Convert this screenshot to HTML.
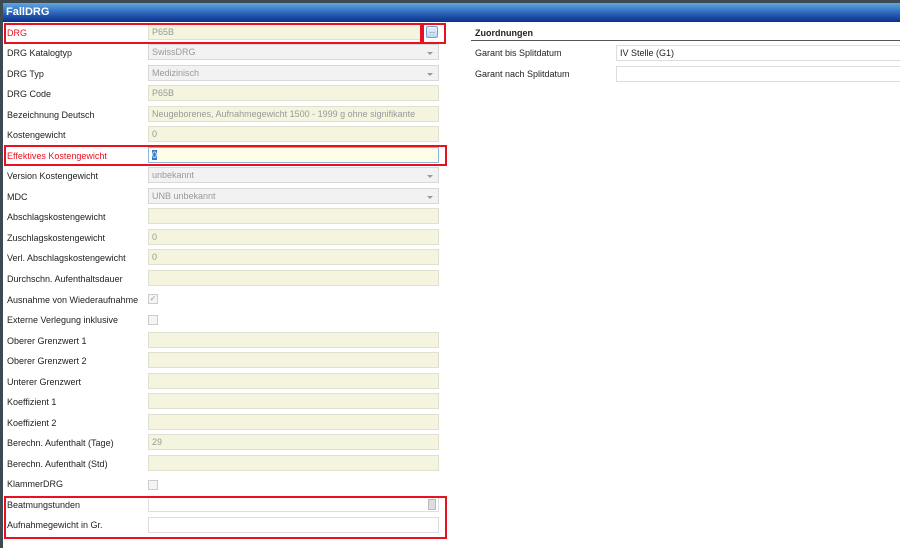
<!DOCTYPE html>
<html><head><meta charset="utf-8"><style>
*{box-sizing:border-box;margin:0;padding:0}
body{width:900px;height:548px;overflow:hidden;background:#fff;font-family:"Liberation Sans",Arial,sans-serif;font-size:9px;color:#222;position:relative}
.top{position:absolute;left:0;top:0;width:900px;height:3px;background:#3d4a52}
.hdr{position:absolute;left:0;top:3px;width:900px;height:19px;background:linear-gradient(#5fa6e0,#2a63b8 55%,#0b2f8c);color:#fff;font-weight:bold;font-size:11px;padding:3px 0 0 6px}
.lb{position:absolute;left:0;top:0;width:3px;height:548px;background:#3d4a52}
.lab{position:absolute;left:7px;font-size:9px;color:#222;margin-top:1px}
.in{position:absolute;left:148px;width:291px;height:16px;background:#f4f4df;border:1px solid #e0e0d0;color:#999;padding:2px 0 0 3px;font-size:9px}
.sel{background:#f2f2f2;border:1px solid #d8d8d8}
.sel:after{content:"";position:absolute;right:5px;top:7px;border:3px solid transparent;border-top:3px solid #999}
.cb{position:absolute;left:148px;width:10px;height:10px;border:1px solid #ccc;background:#f4f4f4}
.red{position:absolute;border:2px solid #e8111f}
.w{background:#fff;border:1px solid #ddd}
</style></head><body>
<div class="top"></div><div class="hdr">FallDRG</div><div class="lb"></div>

<div class="lab" style="top:27px;color:#e8111f">DRG</div><div class="in" style="top:24px;width:274px">P65B</div>
<div style="position:absolute;left:426px;top:26px;width:12px;height:12px;border:1px solid #7aa0cc;border-radius:2px;background:linear-gradient(#e8f2fc,#bcd6f0);font-size:7px;color:#555;text-align:center;line-height:9px">...</div>
<div class="lab" style="top:47px">DRG Katalogtyp</div><div class="in sel" style="top:44px">SwissDRG</div>
<div class="lab" style="top:68px">DRG Typ</div><div class="in sel" style="top:65px">Medizinisch</div>
<div class="lab" style="top:88px">DRG Code</div><div class="in" style="top:85px">P65B</div>
<div class="lab" style="top:109px">Bezeichnung Deutsch</div><div class="in" style="top:106px">Neugeborenes, Aufnahmegewicht 1500 - 1999 g ohne signifikante</div>
<div class="lab" style="top:129px">Kostengewicht</div><div class="in" style="top:126px">0</div>
<div class="lab" style="top:150px;color:#e8111f">Effektives Kostengewicht</div><div class="in" style="top:147px;background:#fefee8;border-color:#8fb7e0;color:#222"><span style="background:#3a78c8;color:#fff">0</span></div>
<div class="lab" style="top:170px">Version Kostengewicht</div><div class="in sel" style="top:167px">unbekannt</div>
<div class="lab" style="top:191px">MDC</div><div class="in sel" style="top:188px">UNB unbekannt</div>
<div class="lab" style="top:211px">Abschlagskostengewicht</div><div class="in" style="top:208px"></div>
<div class="lab" style="top:232px">Zuschlagskostengewicht</div><div class="in" style="top:229px">0</div>
<div class="lab" style="top:252px">Verl. Abschlagskostengewicht</div><div class="in" style="top:249px">0</div>
<div class="lab" style="top:273px">Durchschn. Aufenthaltsdauer</div><div class="in" style="top:270px"></div>
<div class="lab" style="top:294px">Ausnahme von Wiederaufnahme</div><div class="cb" style="top:294px;color:#99a;font-size:8px;line-height:8px;text-align:center">✓</div>
<div class="lab" style="top:314px">Externe Verlegung inklusive</div><div class="cb" style="top:315px"></div>
<div class="lab" style="top:335px">Oberer Grenzwert 1</div><div class="in" style="top:332px"></div>
<div class="lab" style="top:355px">Oberer Grenzwert 2</div><div class="in" style="top:352px"></div>
<div class="lab" style="top:376px">Unterer Grenzwert</div><div class="in" style="top:373px"></div>
<div class="lab" style="top:396px">Koeffizient 1</div><div class="in" style="top:393px"></div>
<div class="lab" style="top:417px">Koeffizient 2</div><div class="in" style="top:414px"></div>
<div class="lab" style="top:437px">Berechn. Aufenthalt (Tage)</div><div class="in" style="top:434px">29</div>
<div class="lab" style="top:458px">Berechn. Aufenthalt (Std)</div><div class="in" style="top:455px"></div>
<div class="lab" style="top:478px">KlammerDRG</div><div class="cb" style="top:480px"></div>
<div class="lab" style="top:499px">Beatmungstunden</div><div class="in w" style="top:496px"><div style="position:absolute;right:2px;top:2px;width:8px;height:11px;background:#ddd;border:1px solid #bbb"></div></div>
<div class="lab" style="top:519px">Aufnahmegewicht in Gr.</div><div class="in w" style="top:517px"></div>

<div class="red" style="left:4px;top:23px;width:418px;height:21px"></div>
<div class="red" style="left:422px;top:23px;width:24px;height:21px"></div>
<div class="red" style="left:4px;top:145px;width:443px;height:21px"></div>
<div class="red" style="left:4px;top:496px;width:443px;height:43px"></div>

<div style="position:absolute;left:475px;top:28px;font-weight:bold;font-size:9px">Zuordnungen</div>
<div style="position:absolute;left:471px;top:40px;width:429px;height:1px;background:#555"></div>
<div class="lab" style="left:475px;top:47px">Garant bis Splitdatum</div>
<div class="in w" style="left:616px;top:45px;width:290px;color:#222">IV Stelle (G1)</div>
<div class="lab" style="left:475px;top:68px">Garant nach Splitdatum</div>
<div class="in w" style="left:616px;top:66px;width:290px"></div>
</body></html>
